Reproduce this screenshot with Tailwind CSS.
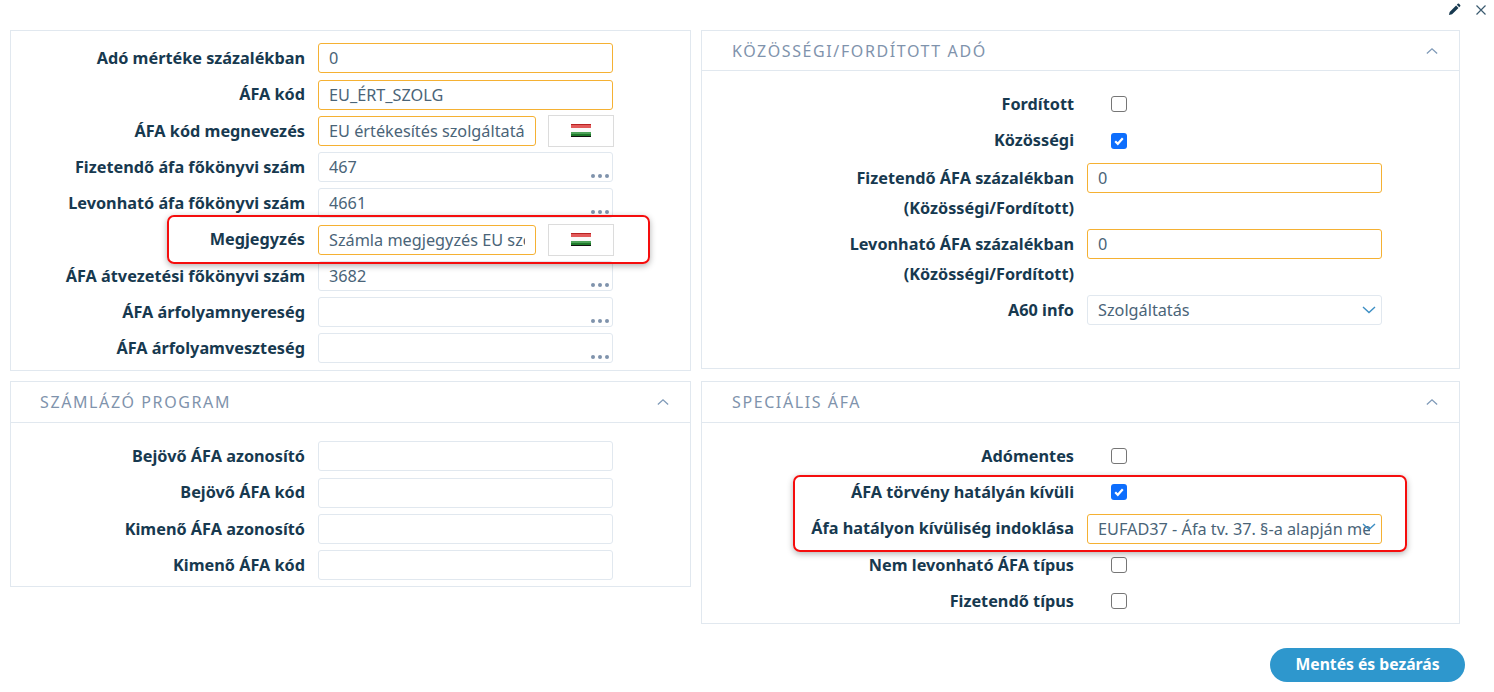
<!DOCTYPE html>
<html lang="hu">
<head>
    <meta charset="UTF-8">
    <title>ÁFA kód</title>
    <script src="https://cdn.jsdelivr.net/npm/@tailwindcss/browser@4"></script>
</head>
<body class="relative w-[1494px] h-[692px] overflow-hidden bg-white font-['Noto_Sans',sans-serif] text-[16.25px] text-[#17394f]">

    <!-- top icons -->
    <div class="flex justify-end items-center gap-[14px] h-[30px] pr-[7px] pb-[11px]">
        <svg width="13" height="13" viewBox="0 0 14 14"><path d="M1 13l.8-3.4 6.9-6.9 2.6 2.6-6.9 6.9zM9.5 1.9l1-1a1 1 0 0 1 1.4 0l1.2 1.2a1 1 0 0 1 0 1.4l-1 1z" fill="#17394f"/></svg>
        <svg width="12" height="12" viewBox="0 0 12 12"><path d="M1.5 1.5l9 9M10.5 1.5l-9 9" stroke="#3b5b70" stroke-width="1.2" fill="none"/></svg>
    </div>

    <div class="flex gap-[10px] pl-[10px]">
        <!-- left column -->
        <div class="w-[681px] flex flex-col gap-[10px]">
            <section class="h-[341px] border border-[#e1e8ef] pt-[12.4px]">
                <div class="flex flex-col gap-[6.25px]">
                    <div class="flex items-center h-[30px]"><label class="w-[294px] text-right font-bold">Adó mértéke százalékban</label><input value="0" class="ml-[13px] w-[295px] h-[30px] px-[10px] border border-[#f5b133] rounded-[3px] text-[#4a6478] outline-none"></div>
                    <div class="flex items-center h-[30px]"><label class="w-[294px] text-right font-bold">ÁFA kód</label><input value="EU_ÉRT_SZOLG" class="ml-[13px] w-[295px] h-[30px] px-[10px] border border-[#f5b133] rounded-[3px] text-[#4a6478] outline-none"></div>
                    <div class="flex items-center h-[30px]"><label class="w-[294px] text-right font-bold">ÁFA kód megnevezés</label><input value="EU értékesítés szolgáltatás" class="ml-[13px] w-[218px] h-[30px] px-[10px] border border-[#f5b133] rounded-[3px] text-[#4a6478] outline-none">
                        <div class="ml-[12px] w-[66px] h-[32px] border border-[#dcdcdc] flex items-center justify-center"><div class="w-[20px] h-[13px] bg-[linear-gradient(#b82222_0_8%,#e25a5a_8%_33%,#fafafa_33%_60%,#4ea35a_60%_75%,#1e7a2a_75%_90%,#111_90%)]"></div></div>
                    </div>
                    <div class="flex items-center h-[30px]"><label class="w-[294px] text-right font-bold">Fizetendő áfa főkönyvi szám</label><div class="relative ml-[13px]"><input value="467" class="block w-[295px] h-[30px] px-[10px] border border-[#e1e8ef] rounded-[3px] text-[#4a6478] outline-none"><span class="absolute right-[4px] bottom-[4px] flex gap-[3px]"><i class="w-[4px] h-[4px] rounded-full bg-[#7f93ac]"></i><i class="w-[4px] h-[4px] rounded-full bg-[#7f93ac]"></i><i class="w-[4px] h-[4px] rounded-full bg-[#7f93ac]"></i></span></div></div>
                    <div class="flex items-center h-[30px]"><label class="w-[294px] text-right font-bold">Levonható áfa főkönyvi szám</label><div class="relative ml-[13px]"><input value="4661" class="block w-[295px] h-[30px] px-[10px] border border-[#e1e8ef] rounded-[3px] text-[#4a6478] outline-none"><span class="absolute right-[4px] bottom-[4px] flex gap-[3px]"><i class="w-[4px] h-[4px] rounded-full bg-[#7f93ac]"></i><i class="w-[4px] h-[4px] rounded-full bg-[#7f93ac]"></i><i class="w-[4px] h-[4px] rounded-full bg-[#7f93ac]"></i></span></div></div>
                    <div class="flex items-center h-[30px]"><label class="w-[294px] text-right font-bold">Megjegyzés</label><input value="Számla megjegyzés EU szolgáltatás" class="ml-[13px] w-[218px] h-[30px] px-[10px] border border-[#f5b133] rounded-[3px] text-[#4a6478] outline-none">
                        <div class="ml-[12px] w-[66px] h-[32px] border border-[#dcdcdc] flex items-center justify-center"><div class="w-[20px] h-[13px] bg-[linear-gradient(#b82222_0_8%,#e25a5a_8%_33%,#fafafa_33%_60%,#4ea35a_60%_75%,#1e7a2a_75%_90%,#111_90%)]"></div></div>
                    </div>
                    <div class="flex items-center h-[30px]"><label class="w-[294px] text-right font-bold">ÁFA átvezetési főkönyvi szám</label><div class="relative ml-[13px]"><input value="3682" class="block w-[295px] h-[30px] px-[10px] border border-[#e1e8ef] rounded-[3px] text-[#4a6478] outline-none"><span class="absolute right-[4px] bottom-[4px] flex gap-[3px]"><i class="w-[4px] h-[4px] rounded-full bg-[#7f93ac]"></i><i class="w-[4px] h-[4px] rounded-full bg-[#7f93ac]"></i><i class="w-[4px] h-[4px] rounded-full bg-[#7f93ac]"></i></span></div></div>
                    <div class="flex items-center h-[30px]"><label class="w-[294px] text-right font-bold">ÁFA árfolyamnyereség</label><div class="relative ml-[13px]"><input class="block w-[295px] h-[30px] px-[10px] border border-[#e1e8ef] rounded-[3px] text-[#4a6478] outline-none"><span class="absolute right-[4px] bottom-[4px] flex gap-[3px]"><i class="w-[4px] h-[4px] rounded-full bg-[#7f93ac]"></i><i class="w-[4px] h-[4px] rounded-full bg-[#7f93ac]"></i><i class="w-[4px] h-[4px] rounded-full bg-[#7f93ac]"></i></span></div></div>
                    <div class="flex items-center h-[30px]"><label class="w-[294px] text-right font-bold">ÁFA árfolyamveszteség</label><div class="relative ml-[13px]"><input class="block w-[295px] h-[30px] px-[10px] border border-[#e1e8ef] rounded-[3px] text-[#4a6478] outline-none"><span class="absolute right-[4px] bottom-[4px] flex gap-[3px]"><i class="w-[4px] h-[4px] rounded-full bg-[#7f93ac]"></i><i class="w-[4px] h-[4px] rounded-full bg-[#7f93ac]"></i><i class="w-[4px] h-[4px] rounded-full bg-[#7f93ac]"></i></span></div></div>
                </div>
            </section>

            <section class="h-[206px] border border-[#e1e8ef]">
                <div class="flex items-center justify-between h-[41px] border-b border-[#e1e8ef] pl-[29px] pr-[21px]">
                    <h2 class="text-[16px] tracking-[1.6px] uppercase text-[#7f93ac]">Számlázó program</h2>
                    <svg width="12" height="8" viewBox="0 0 14 8"><path d="M1 7l6-5.5L13 7" stroke="#7f9ab8" stroke-width="1.5" fill="none"/></svg>
                </div>
                <div class="flex flex-col gap-[6.25px] pt-[18.4px]">
                    <div class="flex items-center h-[30px]"><label class="w-[294px] text-right font-bold">Bejövő ÁFA azonosító</label><input class="ml-[13px] w-[295px] h-[30px] px-[10px] border border-[#e1e8ef] rounded-[3px] outline-none"></div>
                    <div class="flex items-center h-[30px]"><label class="w-[294px] text-right font-bold">Bejövő ÁFA kód</label><input class="ml-[13px] w-[295px] h-[30px] px-[10px] border border-[#e1e8ef] rounded-[3px] outline-none"></div>
                    <div class="flex items-center h-[30px]"><label class="w-[294px] text-right font-bold">Kimenő ÁFA azonosító</label><input class="ml-[13px] w-[295px] h-[30px] px-[10px] border border-[#e1e8ef] rounded-[3px] outline-none"></div>
                    <div class="flex items-center h-[30px]"><label class="w-[294px] text-right font-bold">Kimenő ÁFA kód</label><input class="ml-[13px] w-[295px] h-[30px] px-[10px] border border-[#e1e8ef] rounded-[3px] outline-none"></div>
                </div>
            </section>
        </div>

        <!-- right column -->
        <div class="w-[759px] flex flex-col gap-[12px]">
            <section class="h-[339px] border border-[#e1e8ef]">
                <div class="flex items-center justify-between h-[40px] border-b border-[#e1e8ef] pl-[30px] pr-[21px]">
                    <h2 class="text-[16px] tracking-[1.6px] uppercase text-[#7f93ac]">Közösségi/fordított adó</h2>
                    <svg width="12" height="8" viewBox="0 0 14 8"><path d="M1 7l6-5.5L13 7" stroke="#7f9ab8" stroke-width="1.5" fill="none"/></svg>
                </div>
                <div class="pt-[15px]">
                    <div class="flex items-center h-[36px]"><label class="w-[372px] text-right font-bold">Fordított</label><div class="ml-[37px] w-[16px] h-[16px] border border-[#767676] rounded-[3px]"></div></div>
                    <div class="flex items-center h-[37px]"><label class="w-[372px] text-right font-bold">Közösségi</label><div class="ml-[37px] w-[16px] h-[16px] rounded-[3px] bg-[#0d6efd] flex items-center justify-center"><svg width="12" height="12" viewBox="0 0 12 12"><path d="M2.2 6.2l2.6 2.6 5-5.6" stroke="#fff" stroke-width="2.2" fill="none"/></svg></div></div>
                    <div class="flex items-start mt-[4px] h-[66px]"><label class="w-[372px] text-right font-bold leading-[30px]">Fizetendő ÁFA százalékban<br>(Közösségi/Fordított)</label><input value="0" class="ml-[13px] w-[295px] h-[30px] px-[10px] border border-[#f5b133] rounded-[3px] text-[#4a6478] outline-none"></div>
                    <div class="flex items-start h-[66px]"><label class="w-[372px] text-right font-bold leading-[30px]">Levonható ÁFA százalékban<br>(Közösségi/Fordított)</label><input value="0" class="ml-[13px] w-[295px] h-[30px] px-[10px] border border-[#f5b133] rounded-[3px] text-[#4a6478] outline-none"></div>
                    <div class="flex items-center h-[30px]"><label class="w-[372px] text-right font-bold">A60 info</label><div class="relative ml-[13px] w-[295px] h-[30px] px-[10px] border border-[#e1e8ef] rounded-[3px] text-[#4a6478] leading-[28px]">Szolgáltatás<svg class="absolute right-[5px] top-[10px]" width="14" height="8" viewBox="0 0 14 8"><path d="M1 1l6 5.5L13 1" stroke="#3d8fc4" stroke-width="1.4" fill="none"/></svg></div></div>
                </div>
            </section>

            <section class="h-[243px] border border-[#e1e8ef]">
                <div class="flex items-center justify-between h-[41px] border-b border-[#e1e8ef] pl-[30px] pr-[21px]">
                    <h2 class="text-[16px] tracking-[1.6px] uppercase text-[#7f93ac]">Speciális ÁFA</h2>
                    <svg width="12" height="8" viewBox="0 0 14 8"><path d="M1 7l6-5.5L13 7" stroke="#7f9ab8" stroke-width="1.5" fill="none"/></svg>
                </div>
                <div class="pt-[15px]">
                    <div class="flex items-center h-[36px]"><label class="w-[372px] text-right font-bold">Adómentes</label><div class="ml-[37px] w-[16px] h-[16px] border border-[#767676] rounded-[3px]"></div></div>
                    <div class="flex items-center h-[36px]"><label class="w-[372px] text-right font-bold">ÁFA törvény hatályán kívüli</label><div class="ml-[37px] w-[16px] h-[16px] rounded-[3px] bg-[#0d6efd] flex items-center justify-center"><svg width="12" height="12" viewBox="0 0 12 12"><path d="M2.2 6.2l2.6 2.6 5-5.6" stroke="#fff" stroke-width="2.2" fill="none"/></svg></div></div>
                    <div class="flex items-center h-[37px]"><label class="w-[372px] text-right font-bold">Áfa hatályon kívüliség indoklása</label><div class="relative ml-[13px] w-[295px] h-[30px] pl-[10px] pr-[11px] border border-[#f5b133] rounded-[3px] text-[#4a6478] leading-[28px]"><div class="overflow-hidden whitespace-nowrap">EUFAD37 - Áfa tv. 37. §-a alapján mentes</div><svg class="absolute right-[5px] top-[8px]" width="14" height="8" viewBox="0 0 14 8"><path d="M1 1l6 5.5L13 1" stroke="#3d8fc4" stroke-width="1.4" fill="none"/></svg></div></div>
                    <div class="flex items-center h-[36px]"><label class="w-[372px] text-right font-bold">Nem levonható ÁFA típus</label><div class="ml-[37px] w-[16px] h-[16px] border border-[#767676] rounded-[3px]"></div></div>
                    <div class="flex items-center h-[36px]"><label class="w-[372px] text-right font-bold">Fizetendő típus</label><div class="ml-[37px] w-[16px] h-[16px] border border-[#767676] rounded-[3px]"></div></div>
                </div>
            </section>
        </div>
    </div>

    <div class="flex justify-end pr-[29px] pt-[24px]">
        <button class="w-[195px] h-[34px] rounded-full bg-[#2e97cd] text-white font-bold text-[15.7px]">Mentés és bezárás</button>
    </div>

    <!-- red highlight frames drawn on top of the screenshot -->
    <div class="absolute left-[167px] top-[215px] w-[483px] h-[49px] border-2 border-[#f50d0d] rounded-[7px] shadow-[0_2px_6px_rgba(0,0,0,0.3)]"></div>
    <div class="absolute left-[793px] top-[475px] w-[614px] h-[77px] border-2 border-[#f50d0d] rounded-[7px] shadow-[0_2px_6px_rgba(0,0,0,0.3)]"></div>
</body>
</html>
